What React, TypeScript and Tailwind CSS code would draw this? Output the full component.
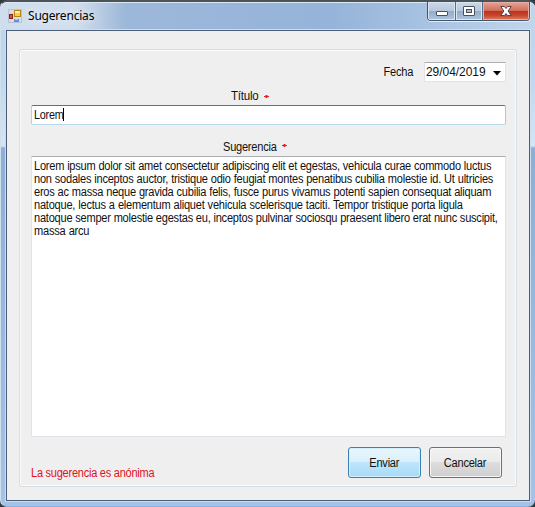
import type { ReactNode } from "react";

const lines = [
  { text: "Lorem ipsum dolor sit amet consectetur adipiscing elit et egestas, vehicula curae commodo luctus", cls: "w-[497px]" },
  { text: "non sodales inceptos auctor, tristique odio feugiat montes penatibus cubilia molestie id. Ut ultricies", cls: "w-[499px]" },
  { text: "eros ac massa neque gravida cubilia felis, fusce purus vivamus potenti sapien consequat aliquam", cls: "w-[497px]" },
  { text: "natoque, lectus a elementum aliquet vehicula scelerisque taciti. Tempor tristique porta ligula", cls: "w-[466px]" },
  { text: "natoque semper molestie egestas eu, inceptos pulvinar sociosqu praesent libero erat nunc suscipit,", cls: "w-[504px]" },
  { text: "massa arcu", cls: "w-[60px]" },
];

function FormIcon() {
  return (
    <svg width="14" height="14" viewBox="0 0 14 14" shapeRendering="crispEdges">
      <rect x="0.5" y="0.5" width="13" height="13" fill="#d5dce5" stroke="#b9c4d0" />
      <rect x="1.5" y="5.5" width="3" height="4" fill="#d4564a" stroke="#8e1f1b" />
      <rect x="6.5" y="1.5" width="6" height="6" fill="#f7cf49" stroke="#b78313" />
      <rect x="7" y="2" width="5" height="2" fill="#fff0a0" />
      <rect x="6" y="10" width="5" height="3" fill="#5a90e6" />
      <rect x="7" y="10" width="3" height="1" fill="#a8caff" />
    </svg>
  );
}

function CaptionButtons() {
  return (
    <div className="flex h-[19px] w-[103px] overflow-hidden rounded-b-[4px] border border-t-0 border-[#46566a] shadow-[0_1px_0_#e2edf9,1px_0_0_#d3e2f3]">
      <div className="flex w-[28px] justify-center border-r border-[#5c6f87] bg-[linear-gradient(#cbd9e8_0%,#b9c9dc_48%,#94abc5_50%,#aec5df_100%)] shadow-[inset_0_0_0_1px_#d9e6f3]">
        <svg width="13" height="18" viewBox="0 0 13 18"><rect x="1.5" y="9.500" width="11" height="4" rx="0.5" fill="#fff" stroke="#4a515e" /></svg>
      </div>
      <div className="flex w-[27px] justify-center border-r border-[#5c6f87] bg-[linear-gradient(#cbd9e8_0%,#b9c9dc_48%,#94abc5_50%,#aec5df_100%)] shadow-[inset_0_0_0_1px_#d9e6f3]">
        <svg width="12" height="18" viewBox="0 0 12 18">
          <rect x="0.5" y="4.500" width="11" height="9" rx="0.5" fill="#fff" stroke="#4a515e" />
          <rect x="3.500" y="7.500" width="5" height="3" fill="#a9bdd5" stroke="#4a515e" />
        </svg>
      </div>
      <div className="flex flex-1 justify-center bg-[linear-gradient(#e4a597_0%,#d2705c_47%,#b9301c_50%,#c9462c_75%,#db8262_100%)] shadow-[inset_0_0_0_1px_#e7afa0]">
        <svg width="14" height="18" viewBox="0 0 14 18">
          <path d="M1.800 4.500h3.600L7 6.500l1.600-2h3.600L9.100 9l3.100 4.500H8.600L7 11.500l-1.600 2H1.800L4.900 9z" fill="#fff" stroke="#5a4148" />
        </svg>
      </div>
    </div>
  );
}

function Label({ children, className = "" }: { children: ReactNode; className?: string }) {
  return <span className={`inline-block whitespace-nowrap leading-[13px] ${className}`}>{children}</span>;
}

function Star() {
  return (
    <svg className="block" width="5" height="5" viewBox="0 0 5 5" shapeRendering="crispEdges">
      <path d="M1 1h3v3H1z" fill="#f08a88" />
      <path d="M0 2h5v1H0zM2 1h1v3H2z" fill="#e32228" />
    </svg>
  );
}

export default function App() {
  return (
    <div className="h-[507px] w-[535px] overflow-hidden bg-[#33383e] font-['Liberation_Sans',sans-serif] text-[12px] tracking-[-0.25px] text-[#111]">
      <div className="flex h-[507px] flex-col rounded-[7px] border-t-2 border-b border-l border-t-[#4c5359] border-b-[#8fb0da] border-l-[#cfdfee] bg-[linear-gradient(#bfd2e8_0,#c3d8ee_80px,#d7e4f1_144px,#8daed5_146px,#98b7df_300px,#a5c2e8_100%)]">
        <header className="flex h-[28px] shrink-0 rounded-t-[6px] border-t border-[#dce8f4] bg-[linear-gradient(90deg,#cfdeee_0,#d2dfed_75px,#9cb7d9_125px,#96b4d9_330px,#a8c3e2_430px,#c1d6ed_100%)] pr-[5px] pl-[7px]">
          <div className="mt-[6px]"><FormIcon /></div>
          <span className="mt-[5px] ml-[6px] w-[65px] font-['Noto_Sans','Open_Sans',sans-serif] text-[12px] leading-[16px] tracking-[-0.2px] whitespace-nowrap text-black [text-shadow:0_0_7px_white]">Sugerencias</span>
          <div className="ml-auto -mt-px"><CaptionButtons /></div>
        </header>

        <main className="mr-[5px] ml-[5px] h-[471px] border border-[#4b6078] bg-[#efefef] px-[12px] pt-[18px] shadow-[0_0_0_1px_#c9def5]">
          <section className="flex h-[438px] w-[498px] flex-col rounded-[3px] border border-[#d5dfe5] pr-[10px] pl-[11px] shadow-[inset_0_0_0_1px_#fbfbfb]">
            <div className="mt-[12px] flex h-[20px] justify-end">
              <Label className="mt-[4px] mr-[11px] origin-right scale-x-[0.92]">Fecha</Label>
              <div className="flex w-[82px] border border-[#e2e3ea] border-t-[#abadb3] bg-white">
                <span className="mt-[2px] ml-[1px] w-[60px] leading-[14px] tracking-[-0.05px]">29/04/2019</span>
                <svg className="mt-[8px] ml-[7px]" width="8" height="5" viewBox="0 0 8 5"><path d="M0 0h8L4 4.500z" fill="#000" /></svg>
              </div>
            </div>

            <div className="mt-[8px] flex h-[15px] pl-[200px]">
              <Label className="w-[33px] origin-left scale-x-[0.96]">Título</Label>
              <span className="mt-[4px]"><Star /></span>
            </div>
            <div className="flex h-[20px] w-[475px] rounded-[2px] border border-t-[#3d7bad] border-r-[#a4c9e3] border-b-[#b7d9ed] border-l-[#b5cfe7] bg-white pl-[2px]">
              <span className="mt-[3px] h-[13px] w-[29px] origin-left scale-x-[0.9] leading-[13px] whitespace-nowrap">Lorem</span>
              <i className="mt-[2px] h-[13px] w-px bg-black" />
            </div>

            <div className="mt-[16px] flex h-[15px] pl-[192px]">
              <Label className="w-[59px] origin-left scale-x-[0.92]">Sugerencia</Label>
              <span className="mt-[2px]"><Star /></span>
            </div>
            <div className="h-[281px] w-[475px] shrink-0 border border-[#e2e3ea] border-t-[#abadb3] bg-white pt-[3px] pl-[2px]">
              {lines.map((line) => (
                <div key={line.text} className={`h-[13px] origin-left scale-x-[0.92] leading-[13px] whitespace-nowrap [text-align-last:justify] ${line.cls}`}>{line.text}</div>
              ))}
            </div>

            <div className="mt-[10px] flex h-[32px]">
              <Label className="mt-[20px] w-[136px] origin-left scale-x-[0.915] text-[#e0141e]">La sugerencia es anónima</Label>
              <div className="mr-[4px] ml-auto flex gap-[8px]">
                <button className="h-[31px] w-[73px] rounded-[3px] border border-[#3c7fb1] bg-[linear-gradient(#eaf6fd_0%,#d9f0fc_48%,#bee6fd_50%,#a7d9f5_100%)] text-center shadow-[inset_0_0_0_1px_#d3f1fc]"><Label className="scale-x-[0.92]">Enviar</Label></button>
                <button className="h-[31px] w-[73px] rounded-[3px] border border-[#707070] bg-[linear-gradient(#f2f2f2_0%,#ebebeb_48%,#dddddd_50%,#cfcfcf_100%)] text-center shadow-[inset_0_0_0_1px_#f6f6f6]"><Label className="scale-x-[0.92]">Cancelar</Label></button>
              </div>
            </div>
          </section>
        </main>
      </div>
    </div>
  );
}
